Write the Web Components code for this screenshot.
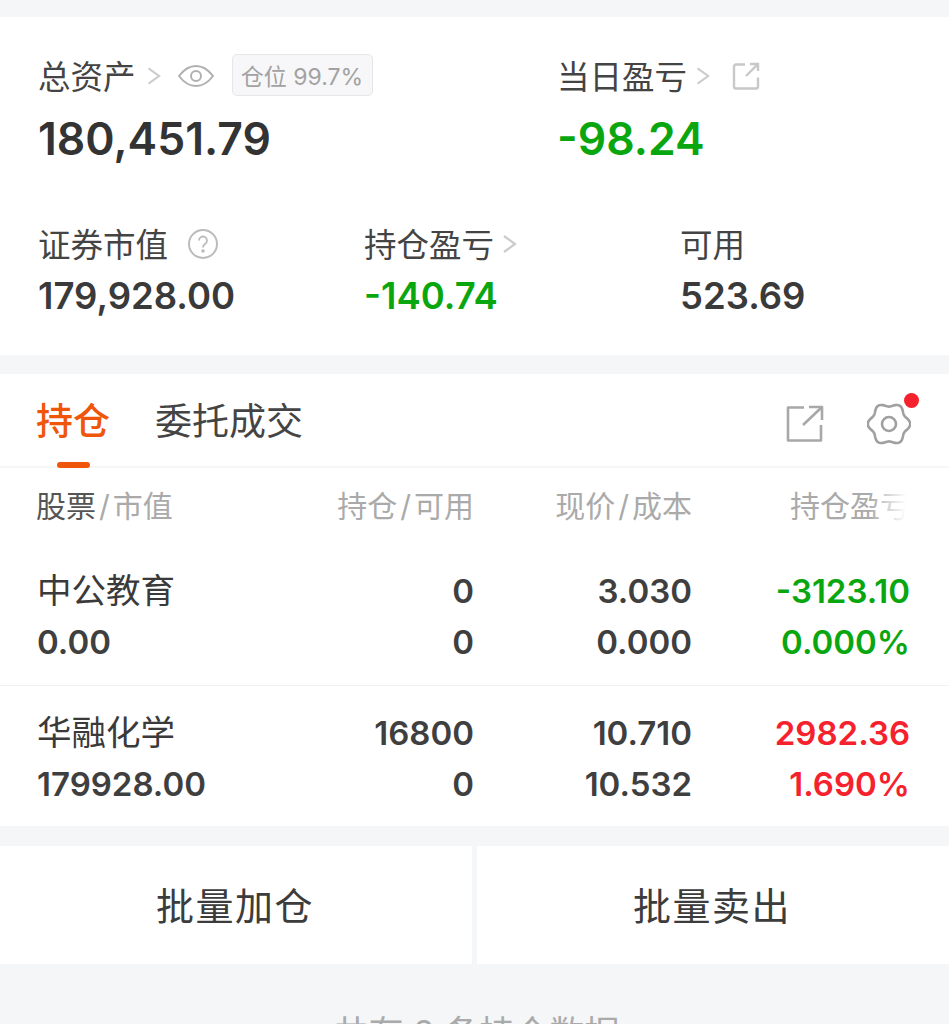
<!DOCTYPE html>
<html lang="zh"><head><meta charset="utf-8"><style>
html,body{margin:0;height:1024px;overflow:hidden;background:#f5f6f8;font-family:"Inter","Noto Sans CJK SC",sans-serif;color:#333}
</style></head><body>
<holdings-page></holdings-page>
<template id="t-page"><style>
:host{display:flex;flex-direction:column;height:1024px;overflow:hidden;padding-top:17px;box-sizing:border-box}
.foot{flex:none;margin-top:47px;text-align:center;font-size:35px;line-height:44px;color:#aaa;padding-left:4px}
</style><asset-summary></asset-summary><positions-panel></positions-panel><batch-actions></batch-actions><div class="foot">共有 2 条持仓数据</div></template>

<template id="t-summary"><style>
:host{display:block;flex:none;background:#fff;height:338px;box-sizing:border-box;padding:0 0 0 38px}
.top{display:grid;grid-template-columns:519px 1fr;padding-top:34px}
.bot{display:grid;grid-template-columns:326px 316px 1fr;margin-top:53px}
.lab{display:flex;align-items:center;height:46px;font-size:32.500px;color:#444}
.lab svg{margin-top:3px}
.big{font-size:44.500px;line-height:54px;font-weight:600;margin-top:15px;color:#333}
.mid{font-size:36.500px;line-height:44px;font-weight:600;margin-top:9px;color:#3a3a3a}
.g{color:#0aa60f}
svg{display:block;flex:none;fill:none}
.tag{margin:2px 0 0 18px;height:42px;width:141px;box-sizing:border-box;border:1.5px solid #e6e6e8;border-radius:5px;background:#f7f7f9;color:#a2a2a2;font-size:23px;display:flex;align-items:center;justify-content:center;white-space:nowrap}
</style>
<div class="top">
<div><div class="lab">总资产<svg width="25" height="24" viewBox="0 0 26 24" stroke="#ccc" stroke-width="2.2"><path d="M13 4l11 8-11 8"/></svg><svg width="36" height="24" viewBox="0 0 36 24" stroke="#b0b0b0" stroke-width="2" style="margin-left:17px"><path d="M1 12C7 4 12 2 18 2s11 2 17 10c-6 8-11 10-17 10S7 20 1 12z"/><circle cx="18" cy="12" r="5"/></svg><div class="tag">仓位 99.7%</div></div><div class="big">180,451.79</div></div>
<div><div class="lab">当日盈亏<svg width="25" height="24" viewBox="0 0 26 24" stroke="#ccc" stroke-width="2.2"><path d="M11 4l11 8-11 8"/></svg><svg width="28" height="28" viewBox="0 0 28 28" stroke="#c8c8c8" stroke-width="2.4" style="margin-left:20px"><path d="M13 2.500H4a2 2 0 0 0-2 2v20a2 2 0 0 0 2 2h20a2 2 0 0 0 2-2v-9M14 14L26 2M18 2h8v7"/></svg></div><div class="big g">-98.24</div></div>
</div>
<div class="bot">
<div><div class="lab">证券市值<svg width="32" height="32" viewBox="0 0 32 32" stroke="#bbb" stroke-width="2" style="margin-left:19px"><circle cx="16" cy="16" r="14"/><path d="M12 12.500a4 4 0 1 1 6 3.500c-1.500 1-2 1.500-2 3.500" stroke-width="1.800"/><circle cx="16" cy="23" r=".8"/></svg></div><div class="mid">179,928.00</div></div>
<div><div class="lab">持仓盈亏<svg width="26" height="24" viewBox="0 0 26 24" stroke="#ccc" stroke-width="2.2"><path d="M10 4l11 8-11 8"/></svg></div><div class="mid g">-140.74</div></div>
<div><div class="lab">可用</div><div class="mid">523.69</div></div>
</div></template>

<template id="t-panel"><style>
:host{display:block;flex:none;background:#fff;margin-top:19px;height:452px}
.tabs{display:flex;height:94px;box-sizing:border-box;border-bottom:2px solid #f6f6f7;padding-left:36px;position:relative;align-items:flex-start}
.tab{font-size:37px;line-height:44px;margin-top:26px;color:#444;margin-right:45px;position:relative}
.on{color:#f0560a;font-weight:500}
.on:after{content:"";position:absolute;left:21px;top:62px;width:33px;height:6px;border-radius:3px;background:#f0560a}
.icons{margin-left:auto;display:flex;align-items:center;padding:28px 38px 0 0;gap:43px}
svg{display:block;fill:none}
.cog{position:relative}
.dot{position:absolute;right:-8px;top:-9px;width:15px;height:15px;border-radius:50%;background:#f5222d}
.head{display:grid;grid-template-columns:1fr 173px 218px 218px;padding:0 39px 0 36px;height:76px;align-items:center;font-size:30px;color:#aaa;position:relative;line-height:1}
.head>div{text-align:right;white-space:nowrap}.head>div:first-child{text-align:left}
.head b{font-weight:400;color:#555}
.head i{font-style:normal;margin:0 3px}
.fade{position:absolute;right:30px;top:0;height:100%;width:50px;background:linear-gradient(90deg,rgba(255,255,255,0),#fff 75%)}
.row{display:grid;grid-template-columns:1fr 173px 218px 218px;padding:4px 39px 0 37px;height:141px;box-sizing:border-box;align-content:center;row-gap:9px;font-size:33px;font-weight:600;color:#3f3f3f;line-height:42px}
.row+.row{border-top:1.500px solid #f1f1f2}
.row>span{text-align:right}.row>span.l{text-align:left}
.n{font-size:34.500px;font-weight:400;color:#3a3a3a}
.g{color:#0aa60f}.r{color:#f5222d}
</style>
<div class="tabs"><div class="tab on">持仓</div><div class="tab">委托成交</div>
<div class="icons"><svg width="38" height="38" viewBox="0 0 38 38" stroke="#a8a8a8" stroke-width="2.600"><path d="M18 2.500H2v33h33V20M17 20L36 2M23 2h13v13" stroke-linejoin="round"/></svg>
<div class="cog"><svg width="44" height="44" viewBox="0 0 44 44" stroke="#a0a0a0" stroke-width="2.600"><path id="gear"/><circle cx="22" cy="22" r="7"/></svg><div class="dot"></div></div></div></div>
<div class="head"><div><b>股票</b><i>/</i>市值</div><div>持仓<i>/</i>可用</div><div>现价<i>/</i>成本</div><div>持仓盈亏<span class="fade"></span></div></div>
<div class="row"><span class="l n">中公教育</span><span>0</span><span>3.030</span><span class="g">-3123.10</span><span class="l">0.00</span><span>0</span><span>0.000</span><span class="g">0.000%</span></div>
<div class="row"><span class="l n">华融化学</span><span>16800</span><span>10.710</span><span class="r">2982.36</span><span class="l">179928.00</span><span>0</span><span>10.532</span><span class="r">1.690%</span></div>
</template>

<template id="t-batch"><style>
:host{display:grid;flex:none;grid-template-columns:472px 1fr;column-gap:5px;margin-top:20px;height:118px}
div{background:#fff;display:flex;align-items:center;justify-content:center;font-size:38px;color:#3c3c3c;letter-spacing:1.500px;padding:0 2px 4px 0}
</style><div>批量加仓</div><div>批量卖出</div></template>

<script>
for (const [name,id] of [["holdings-page","t-page"],["asset-summary","t-summary"],["positions-panel","t-panel"],["batch-actions","t-batch"]]) {
  customElements.define(name, class extends HTMLElement {
    constructor(){
      super();
      const root=this.attachShadow({mode:"open"});
      root.appendChild(document.getElementById(id).content.cloneNode(true));
      const gear=root.getElementById("gear");
      if(gear){
        let d="";
        for(let i=0;i<120;i++){
          const t=i/120*2*Math.PI, r=19.3+1.9*Math.cos(6*t);
          d+=(i?"L":"M")+(22+r*Math.cos(t)).toFixed(2)+" "+(22+r*Math.sin(t)).toFixed(2);
        }
        gear.setAttribute("d",d+"z");
      }
    }
  });
}
</script>
</body></html>
